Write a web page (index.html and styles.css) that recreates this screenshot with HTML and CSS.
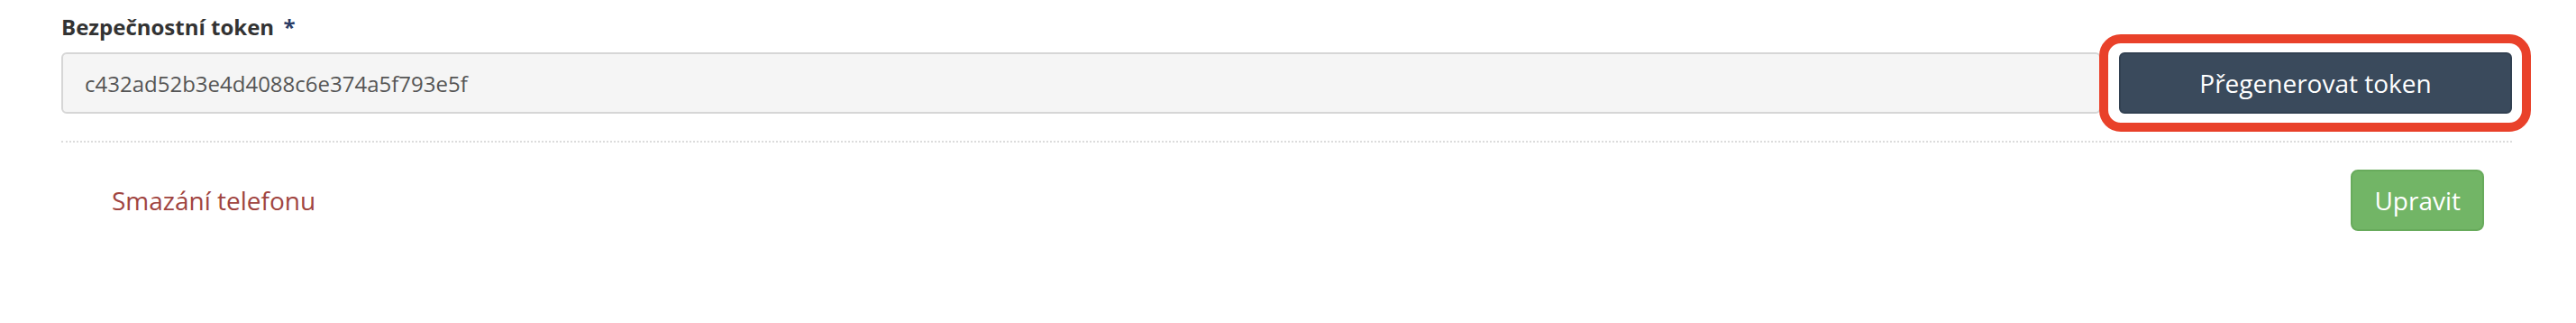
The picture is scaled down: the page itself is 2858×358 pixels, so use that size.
FILE: index.html
```html
<!DOCTYPE html>
<html lang="cs">
<head>
<meta charset="utf-8">
<title>Bezpečnostní token</title>
<link rel="stylesheet" href="styles.css">
</head>
<body>
<form class="panel">
  <div class="field">
    <label class="field-label" for="token">Bezpečnostní token <span class="required">*</span></label>
    <div class="token-row">
      <input class="token-input" id="token" type="text" value="c432ad52b3e4d4088c6e374a5f793e5f" readonly>
      <div class="highlight">
        <button type="button" class="btn btn-dark">Přegenerovat token</button>
      </div>
    </div>
  </div>
  <div class="form-footer">
    <a class="delete-link" href="#">Smazání telefonu</a>
    <button type="submit" class="btn btn-success">Upravit</button>
  </div>
</form>
</body>
</html>
```
FILE: styles.css
```css
* { box-sizing: border-box; }
html, body { margin: 0; padding: 0; background: #fff; }
body {
  font-family: "Open Sans", "DejaVu Sans", sans-serif;
  color: #333;
  width: 2858px;
  height: 358px;
  overflow: hidden;
}
.panel {
  padding: 13px 71px 0 68px;
}
.field-label {
  display: block;
  font-size: 24px;
  line-height: 34px;
  font-weight: 700;
  color: #333;
  margin-bottom: 11px;
}
.required {
  color: #2c3d66;
  margin-left: 4px;
}
.token-row {
  display: flex;
  align-items: stretch;
  gap: 20px;
}
.token-input {
  flex: 1;
  min-width: 0;
  height: 68px;
  border: 2px solid #d6d6d6;
  border-radius: 6px;
  background: #f5f5f5;
  padding: 0 24px;
  font-family: inherit;
  font-size: 24px;
  color: #555;
  outline: none;
}
.highlight {
  position: relative;
  display: flex;
}
.highlight::after {
  content: "";
  position: absolute;
  top: -20px;
  bottom: -20px;
  left: -22px;
  right: -21px;
  border: 10px solid #e9412a;
  border-radius: 24px;
  pointer-events: none;
}
.btn {
  font-family: inherit;
  font-size: 28px;
  line-height: 40px;
  padding: 12px 24px;
  border: 2px solid transparent;
  border-radius: 6px;
  color: #fff;
  cursor: pointer;
}
.btn-dark {
  width: 436px;
  height: 68px;
  background: #3a4a5c;
  border-color: #324152;
}
.form-footer {
  margin-top: 30px;
  padding-top: 30px;
  border-top: 2px dotted #dcdcdc;
  display: flex;
  align-items: center;
  justify-content: space-between;
}
.delete-link {
  margin-left: 56px;
  font-size: 28px;
  line-height: 40px;
  color: #a04440;
  text-decoration: none;
}
.btn-success {
  margin-right: 31px;
  background: #72b566;
  border-color: #68ab5c;
  border-radius: 8px;
}
```
